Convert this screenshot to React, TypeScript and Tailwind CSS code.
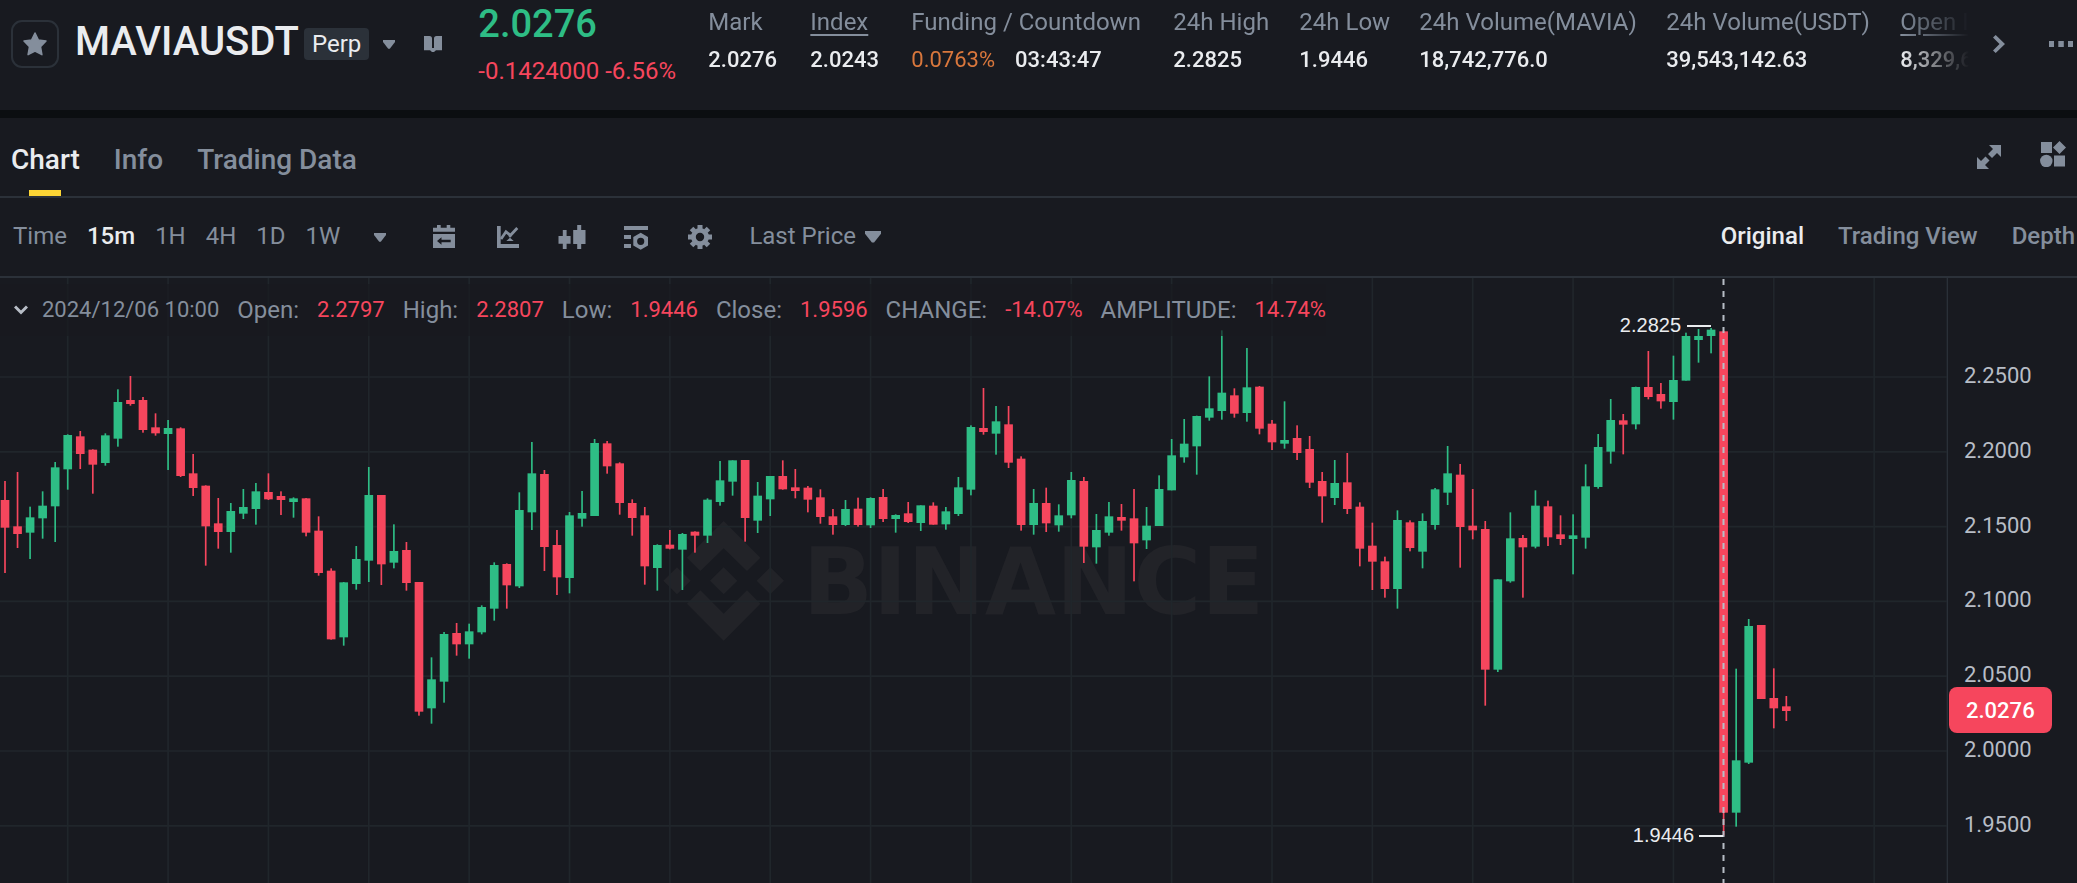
import type { ReactNode } from "react";

// One candle is [direction, high, body top, body bottom, low], in chart units (y grows downwards).
type Candle = ["u" | "d", number, number, number, number];

const CANDLES: Candle[] = [
  ["d", 633, 690, 773, 909], ["d", 606, 769, 792, 834], ["u", 710, 742, 788, 867], ["u", 664, 707, 745, 806],
  ["u", 576, 592, 709, 816], ["u", 493, 495, 598, 659], ["d", 483, 499, 552, 597], ["d", 538, 539, 584, 671],
  ["u", 490, 496, 579, 587], ["u", 358, 396, 506, 530], ["d", 318, 390, 402, 407], ["d", 381, 390, 480, 488],
  ["d", 430, 472, 490, 497], ["u", 450, 474, 492, 600], ["d", 472, 475, 618, 621], ["d", 552, 610, 654, 678],
  ["d", 646, 647, 769, 887], ["d", 684, 760, 786, 836], ["u", 699, 723, 786, 848], ["u", 657, 711, 731, 747],
  ["u", 639, 664, 717, 764], ["d", 610, 666, 688, 690], ["d", 664, 678, 690, 735], ["u", 682, 685, 696, 743],
  ["d", 684, 685, 788, 799], ["d", 739, 782, 909, 917], ["d", 895, 902, 1108, 1109], ["u", 936, 937, 1102, 1127],
  ["u", 828, 867, 942, 959], ["u", 591, 675, 872, 936], ["d", 675, 675, 883, 945], ["u", 763, 843, 878, 895],
  ["d", 816, 840, 939, 962], ["d", 936, 936, 1325, 1337], ["u", 1162, 1228, 1315, 1361], ["u", 1086, 1092, 1235, 1298],
  ["d", 1059, 1089, 1123, 1157], ["u", 1061, 1084, 1123, 1166], ["u", 1006, 1011, 1087, 1093], ["u", 877, 885, 1016, 1052],
  ["d", 880, 882, 946, 1016], ["u", 667, 720, 949, 954], ["u", 516, 610, 727, 780], ["d", 600, 612, 831, 903],
  ["d", 780, 825, 922, 975], ["u", 726, 736, 924, 970], ["u", 663, 729, 746, 770], ["u", 507, 519, 738, 738],
  ["d", 513, 520, 589, 611], ["d", 577, 580, 699, 734], ["d", 688, 699, 744, 797], ["d", 711, 736, 889, 944],
  ["u", 823, 825, 894, 962], ["d", 780, 824, 836, 838], ["u", 789, 792, 839, 960], ["d", 784, 785, 797, 848],
  ["u", 685, 689, 797, 819], ["u", 573, 631, 696, 707], ["u", 571, 571, 635, 677], ["d", 570, 570, 744, 815],
  ["u", 636, 677, 752, 789], ["u", 618, 618, 688, 738], ["d", 571, 618, 658, 659], ["d", 597, 652, 663, 685],
  ["d", 648, 653, 689, 727], ["d", 658, 682, 741, 761], ["d", 717, 739, 765, 794], ["u", 690, 717, 765, 768],
  ["d", 683, 716, 765, 770], ["u", 682, 684, 766, 774], ["d", 657, 681, 747, 756], ["u", 733, 735, 747, 788],
  ["d", 696, 730, 756, 759], ["u", 706, 706, 759, 783], ["d", 697, 707, 764, 764], ["u", 711, 724, 763, 779],
  ["u", 621, 652, 732, 738], ["u", 466, 471, 659, 676], ["d", 354, 474, 486, 494], ["u", 408, 454, 491, 554],
  ["d", 408, 463, 578, 594], ["d", 559, 566, 765, 782], ["u", 657, 699, 765, 794], ["d", 653, 699, 760, 786],
  ["u", 703, 736, 766, 785], ["u", 606, 630, 736, 745], ["d", 621, 633, 830, 879], ["u", 732, 780, 832, 881],
  ["u", 696, 739, 788, 797], ["d", 702, 741, 752, 782], ["d", 657, 745, 820, 934], ["u", 711, 767, 811, 837],
  ["u", 616, 657, 768, 768], ["u", 507, 556, 661, 661], ["u", 447, 521, 562, 578], ["u", 437, 438, 529, 614],
  ["u", 319, 415, 443, 452], ["u", 181, 368, 423, 449], ["d", 355, 376, 431, 443], ["u", 234, 352, 429, 455],
  ["d", 348, 350, 476, 493], ["d", 450, 461, 517, 540], ["u", 394, 510, 521, 536], ["d", 466, 504, 549, 570],
  ["d", 498, 537, 638, 654], ["d", 606, 633, 679, 758], ["u", 570, 639, 684, 705], ["d", 549, 637, 717, 732],
  ["d", 697, 710, 836, 889], ["d", 758, 827, 875, 960], ["d", 860, 874, 957, 983], ["u", 721, 750, 957, 1016],
  ["d", 751, 757, 834, 844], ["u", 730, 753, 845, 895], ["u", 654, 658, 765, 779], ["u", 528, 610, 668, 705],
  ["d", 582, 614, 771, 893], ["d", 657, 767, 781, 808], ["d", 753, 777, 1199, 1307], ["u", 928, 928, 1199, 1206],
  ["u", 727, 805, 934, 938], ["d", 795, 804, 832, 983], ["u", 661, 707, 830, 835], ["d", 692, 709, 802, 828],
  ["d", 736, 793, 807, 825], ["u", 733, 796, 807, 913], ["u", 583, 649, 803, 836], ["u", 492, 531, 651, 656],
  ["u", 387, 450, 545, 581], ["d", 432, 451, 464, 553], ["u", 350, 351, 463, 478], ["d", 243, 351, 381, 388],
  ["d", 339, 372, 394, 416], ["u", 257, 330, 396, 449], ["u", 188, 198, 332, 332], ["u", 177, 198, 210, 278],
  ["u", 174, 179, 198, 250], ["d", 183, 184, 1628, 1697], ["u", 1196, 1471, 1628, 1670], ["u", 1047, 1068, 1478, 1482],
  ["d", 1065, 1065, 1287, 1287], ["d", 1195, 1284, 1315, 1375], ["d", 1278, 1309, 1323, 1353],
];

const PRICE_TICKS = ["2.2500", "2.2000", "2.1500", "2.1000", "2.0500", "2.0000", "1.9500"];

const STATS = [
  { label: "Mark", value: "2.0276", width: "w-[102px]" },
  { label: "Index", value: "2.0243", width: "w-[101px]", link: true },
  { label: "Funding / Countdown", value: "03:43:47", rate: "0.0763%", width: "w-[262px]" },
  { label: "24h High", value: "2.2825", width: "w-[126px]" },
  { label: "24h Low", value: "1.9446", width: "w-[120px]" },
  { label: "24h Volume(MAVIA)", value: "18,742,776.0", width: "w-[247px]" },
  { label: "24h Volume(USDT)", value: "39,543,142.63", width: "w-[234px]" },
  { label: "Open Interest(USDT)", value: "8,329,614.25", width: "w-[234px]", link: true },
];

const LEGEND = [
  ["Open:", "2.2797"],
  ["High:", "2.2807"],
  ["Low:", "1.9446"],
  ["Close:", "1.9596"],
  ["CHANGE:", "-14.07%"],
  ["AMPLITUDE:", "14.74%"],
];

const STEP = 37.634;
const candleX = (i: number) => 15 + i * STEP;

function Caret({ className }: { className: string }) {
  return (
    <svg viewBox="0 0 12 9" className={className} fill="currentColor" aria-hidden="true">
      <path d="M0 0h12v2L6.8 8.7H5.2L0 2z" />
    </svg>
  );
}

function ToolIcon({ label, children }: { label: string; children: ReactNode }) {
  return (
    <button aria-label={label} className="hover:text-[#eaecef]">
      <svg viewBox="0 0 24 24" className="block size-6 overflow-visible" fill="currentColor">
        {children}
      </svg>
    </button>
  );
}

function Header() {
  return (
    <header className="flex h-[110px] items-start pl-[11px] pr-1">
      <button
        aria-label="Add to favorites"
        className="mt-5 flex size-12 shrink-0 items-center justify-center rounded-[11px] border-2 border-[#2b3139]"
      >
        <svg viewBox="0 0 24 24" className="size-6" fill="currentColor">
          <path
            d="M12 1 L15.3 7.900 L23 9 L17.500 14.700 L18.900 22.700 L12 19.100 L5.100 22.700 L6.500 14.700 L1 9 L8.700 7.900z"
            stroke="currentColor"
            strokeWidth="1.500"
            strokeLinejoin="round"
          />
        </svg>
      </button>
      <div className="mt-5 flex h-12 shrink-0 items-center pl-4">
        <h1 className="w-[229px] pb-1 text-[40px] leading-none font-medium text-[#eaecef]">MAVIAUSDT</h1>
        <span className="rounded bg-[#2b3139] px-2 text-2xl leading-8 text-[#eaecef]">Perp</span>
        <button aria-label="Select market" className="pl-[14px]">
          <Caret className="h-[9px] w-3" />
        </button>
        <a href="#guide" aria-label="Contract guide" className="pl-[29px]">
          <svg viewBox="0 0 18 16" className="h-4 w-[18px]" fill="currentColor">
            <path d="M0 0h5.5Q8 0 8 2.5V12h2V2.500Q10 0 12.500 0H18v14.300h-6L10 16H8l-2-1.700H0z" />
          </svg>
        </a>
      </div>
      <div className="w-[266px] shrink-0 pt-px pl-9">
        <div className="text-[38px] leading-[46px] font-medium text-[#2ebd85]">2.0276</div>
        <div className="mt-2 text-2xl leading-8 whitespace-nowrap text-[#f6465d]">-0.1424000 -6.56%</div>
      </div>
      <dl className="flex min-w-0 flex-1 overflow-hidden pt-[6px] whitespace-nowrap [mask-image:linear-gradient(to_right,#000_calc(100%-68px),transparent)]">
        {STATS.map((stat) => (
          <div key={stat.label} className={`shrink-0 ${stat.width}`}>
            <dt className="text-2xl leading-8">
              {stat.link ? (
                <a href="#stat" className="underline decoration-2 underline-offset-4">
                  {stat.label}
                </a>
              ) : (
                stat.label
              )}
            </dt>
            <dd className="mt-[6px] text-[22px] leading-8 font-medium text-[#eaecef]">
              {stat.rate && <span className="mr-5 font-normal text-[#d9773c]">{stat.rate}</span>}
              {stat.value}
            </dd>
          </div>
        ))}
      </dl>
      <button aria-label="Scroll stats" className="mt-[35px] pl-6">
        <svg viewBox="0 0 12 18" className="block h-[18px] w-3" fill="currentColor">
          <path d="M0 2.500L2.700 0L12 9L2.700 18L0 15.500L6.500 9z" />
        </svg>
      </button>
      <button aria-label="More" className="mt-[41px] pl-11">
        <svg viewBox="0 0 24 6" className="block h-[6px] w-6" fill="currentColor">
          <path d="M0 0h5v6H0zM9.300 0h5.500v6H9.300zM19 0h5v6h-5z" />
        </svg>
      </button>
    </header>
  );
}

function Tabs() {
  return (
    <nav className="flex h-20 items-stretch justify-between border-b-2 border-[#2b3139] px-[11px]">
      <div className="flex gap-[34px] text-[28px] leading-none font-medium">
        <button className="relative pt-[6px] text-[#eaecef]">
          Chart
          <span className="absolute inset-x-0 bottom-0 mx-auto h-[6px] w-8 bg-[#fcd535]" />
        </button>
        <button className="pt-[6px]">Info</button>
        <button className="pt-[6px]">Trading Data</button>
      </div>
      <div className="flex items-center gap-[39px]">
        <button aria-label="Full screen">
          <svg viewBox="0 0 24 24" className="block size-6" fill="currentColor">
            <path d="M12 0h12v12l-4-4-5 5-4-4 5-5zM0 24V12l4 4 4.500-4.500 4 4L8 20l4 4z" />
          </svg>
        </button>
        <button aria-label="Layout" className="pb-[7px]">
          <svg viewBox="0 0 26 26" className="block size-[26px]" fill="currentColor">
            <path d="M1 1h11v11H1zM19.500 0l6.500 6.500-6.500 6.500L13 6.500zM14 14.500h11v11H14z" />
            <circle cx="6.300" cy="20" r="6.200" />
          </svg>
        </button>
      </div>
    </nav>
  );
}

function Toolbar() {
  return (
    <div className="flex h-20 items-center justify-between overflow-hidden border-b-2 border-[#2b3139] pl-[13px] text-2xl leading-8 whitespace-nowrap">
      <div className="flex items-center">
        <div className="flex items-center gap-5 pb-[2px]">
          <span>Time</span>
          <button className="font-medium text-[#eaecef]">15m</button>
          <button>1H</button>
          <button>4H</button>
          <button>1D</button>
          <button>1W</button>
        </div>
        <button aria-label="More intervals" className="pl-[34px]">
          <Caret className="block h-[9px] w-3" />
        </button>
        <div className="flex items-center gap-10 pl-[46px]">
          <ToolIcon label="Go to date">
            <path d="M5 0h3.700v2.700h6V0h3.600v2.700H23v4H1v-4h4z" />
            <path fillRule="evenodd" d="M1 9h22v14H1zM5 16l4.500 3.700v-2.400h9.200v-2.500H9.500v-2.500z" />
          </ToolIcon>
          <ToolIcon label="Indicators">
            <path d="M1 1h3.700v18H23v4H1z" />
            <path d="M5 14L10 6.800l4.500 3.500L21.300 3" fill="none" stroke="currentColor" strokeWidth="2.800" />
            <path d="M10.300 16l3.700-3.300 3.700 3.300zM12 10.500h4L14 13z" />
          </ToolIcon>
          <ToolIcon label="Chart style">
            <path d="M-1.500 11h4.300V5h3.800v6h4v7.700h-4V24H2.800v-5.300h-4.300zM13.200 5h4V0h4v5h4.300v14h-4.300v5h-4v-5h-4z" />
          </ToolIcon>
          <ToolIcon label="Layers">
            <path d="M0 1h24v4H0zM0 10h7v4H0zM0 19h7v4H0z" />
            <path fillRule="evenodd" d="M16.700 7.700L24 12v8.500l-7.300 4.300L9.300 20.500V12zM16.700 12.700a3.600 3.600 0 1 0 0 7.200a3.600 3.600 0 1 0 0-7.200z" />
          </ToolIcon>
          <ToolIcon label="Chart settings">
            <path fillRule="evenodd" d="M12 3a9 9 0 1 0 0 18a9 9 0 1 0 0-18zM12 7.800a4.200 4.200 0 1 1 0 8.400a4.200 4.200 0 1 1 0-8.400z" />
            <path d="M9.500 0h5v4h-5zM9.500 20h5v4h-5zM0 9.500h4v5H0zM20 9.500h4v5h-4z" />
            <path d="M9.500 0h5v4h-5zM9.500 20h5v4h-5zM0 9.500h4v5H0zM20 9.500h4v5h-4z" transform="rotate(45 12 12)" />
          </ToolIcon>
        </div>
        <div className="relative ml-[37px] pb-[2px]">
          <select aria-label="Price type" defaultValue="last" className="block w-[132px] appearance-none bg-transparent leading-8 outline-none">
            <option value="last">Last Price</option>
            <option value="mark">Mark Price</option>
          </select>
          <Caret className="pointer-events-none absolute top-[11px] right-0 h-3 w-4" />
        </div>
      </div>
      <div className="flex gap-[34px] pr-[2px] pb-[2px] font-medium">
        <button className="text-[#eaecef]">Original</button>
        <button>Trading View</button>
        <button>Depth</button>
      </div>
    </div>
  );
}

function Legend() {
  return (
    <div className="absolute top-[6px] left-0 flex h-[52px] items-center gap-[18px] bg-[#181a20]/70 pl-[14px] text-2xl leading-8 whitespace-nowrap">
      <div className="flex items-center">
        <button aria-label="Collapse" className="w-7">
          <svg viewBox="0 0 14 10" className="block h-[10px] w-[14px]" fill="none" stroke="#b7bdc6" strokeWidth="3">
            <path d="M1 1.500l6 6 6-6" />
          </svg>
        </button>
        <span className="text-[22px]">2024/12/06 10:00</span>
      </div>
      {LEGEND.map(([label, value]) => (
        <div key={label} className="flex gap-[18px]">
          <span>{label}</span>
          <span className="text-[22px] text-[#f6465d]">{value}</span>
        </div>
      ))}
    </div>
  );
}

function PriceChart() {
  return (
    <section className="relative">
      <svg viewBox="0 0 2077 605" className="block h-auto w-full" role="img" aria-label="MAVIAUSDT 15 minute candles">
        <g transform="translate(0 -8) scale(0.333333)">
          <g fill="#222328">
            <path d="M2171 753l110 110-40 40-70-68-70 68-40-40zM2171 1112l110-111-40-40-70 70-70-70-40 40z" />
            <path d="M2171 892l41 40-41 41-41-41zM2031 892l41 40-41 41-41-41zM2311 892l41 40-41 41-41-41z" />
            <text x="2408" y="1033" fontSize="277" fontWeight="700" className="font-['DejaVu_Sans',sans-serif]">
              BINANCE
            </text>
          </g>
          <g stroke="#20262b" strokeWidth="5">
            {PRICE_TICKS.map((tick, i) => (
              <line key={tick} x1="0" x2="5840" y1={321 + i * 224.4} y2={321 + i * 224.4} />
            ))}
            {Array.from({ length: 19 }, (_, i) => (
              <line key={i} x1={candleX(5 + i * 8)} x2={candleX(5 + i * 8)} y1="24" y2="1840" />
            ))}
          </g>
          <line x1="5842" x2="5842" y1="24" y2="1840" stroke="#2b3139" strokeWidth="4" />
          {CANDLES.map(([dir, high, top, bottom, low], i) => (
            <g key={i} fill={dir === "u" ? "#2ebd85" : "#f6465d"}>
              <rect x={candleX(i) - 2.5} y={high} width="5" height={low - high} />
              <rect x={candleX(i) - 13} y={top} width="26" height={bottom - top} />
            </g>
          ))}
        </g>
        <line x1="1723.500" x2="1723.500" y1="1" y2="605" stroke="#b7bdc6" strokeWidth="2" strokeDasharray="6 6" />
        <g stroke="#eaecef" strokeWidth="2">
          <line x1="1687" x2="1711" y1="48" y2="48" />
          <line x1="1699" x2="1723" y1="558" y2="558" />
        </g>
        <g fill="#eaecef" fontSize="20" textAnchor="end" className="font-['Liberation_Sans',sans-serif]">
          <text x="1681" y="54">2.2825</text>
          <text x="1694" y="564">1.9446</text>
        </g>
        <g fill="#b7bdc6" fontSize="22">
          {PRICE_TICKS.map((tick, i) => (
            <text key={tick} x="1964" y={105 + i * 74.8}>
              {tick}
            </text>
          ))}
        </g>
        <rect x="1949" y="409" width="103" height="46" rx="8" fill="#f6465d" />
        <text x="1966" y="440" fill="#fff" fontSize="22" fontWeight="500">
          2.0276
        </text>
      </svg>
      <Legend />
    </section>
  );
}

export default function App() {
  return (
    <main className="min-h-screen overflow-hidden bg-[#181a20] font-[Roboto,sans-serif] text-[#848e9c]">
      <Header />
      <div className="h-2 bg-[#0b0e11]" />
      <Tabs />
      <Toolbar />
      <PriceChart />
    </main>
  );
}
